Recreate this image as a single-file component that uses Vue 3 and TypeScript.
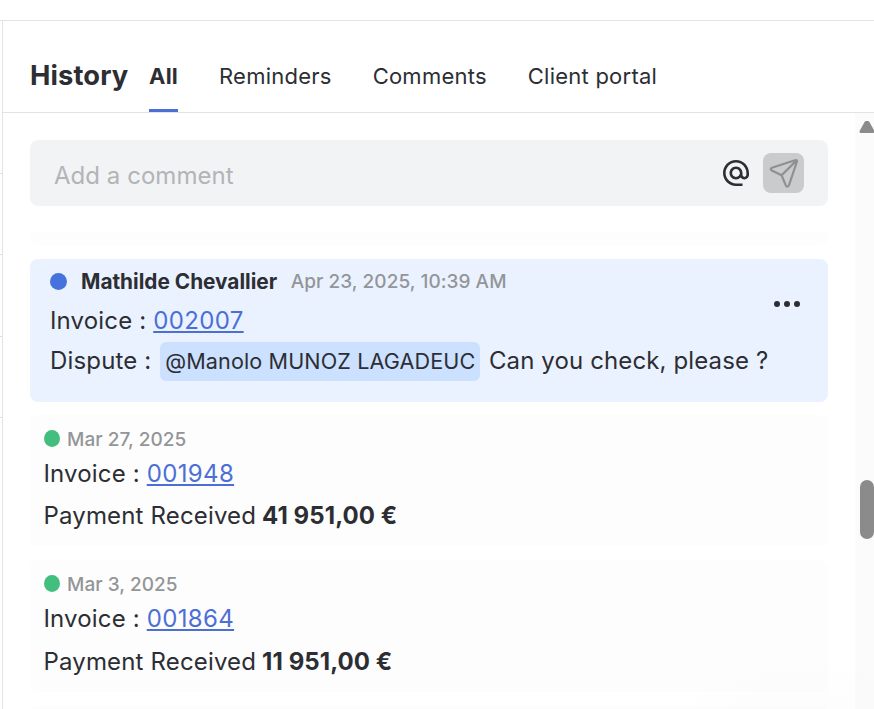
<script setup lang="ts">
import { ref } from 'vue'

interface Payment {
  date: string
  invoice: string
  amount: string
}

const tabs: string[] = ['All', 'Reminders', 'Comments', 'Client portal']
const activeTab = ref('All')

const payments: Payment[] = [
  { date: 'Mar 27, 2025', invoice: '001948', amount: '41\u00a0951,00 €' },
  { date: 'Mar 3, 2025', invoice: '001864', amount: '11\u00a0951,00 €' },
]
</script>

<template>
  <div class="page">
    <aside class="behind">
      <i v-for="n in 4" :key="n" class="row-line"></i>
    </aside>
    <main class="panel">
      <header class="header">
        <h1 class="title">History</h1>
        <nav class="tabs">
          <button
            v-for="tab in tabs"
            :key="tab"
            class="tab"
            :class="{ active: tab === activeTab }"
            @click="activeTab = tab"
          >{{ tab }}</button>
        </nav>
      </header>

      <div class="body">
        <div class="content">
          <div class="composer">
            <span class="placeholder">Add a comment</span>
            <svg class="at" viewBox="2 2 20 20">
              <path d="M12 2C6.48 2 2 6.48 2 12s4.48 10 10 10h5v-2h-5c-4.34 0-8-3.66-8-8s3.66-8 8-8 8 3.66 8 8v1.43c0 .79-.71 1.57-1.5 1.57s-1.5-.78-1.5-1.57V12c0-2.76-2.24-5-5-5s-5 2.24-5 5 2.24 5 5 5c1.38 0 2.64-.56 3.54-1.47.65.89 1.77 1.47 2.96 1.47 1.97 0 3.5-1.6 3.5-3.57V12c0-5.52-4.48-10-10-10zm0 13c-1.66 0-3-1.34-3-3s1.34-3 3-3 3 1.34 3 3-1.34 3-3 3z" />
            </svg>
            <button class="send">
              <svg viewBox="0 0 41 40">
                <path d="M9 14.7 32 7.2Q34.6 6.4 33.8 9L26 32.2Q24.3 35 22.7 32.2L18.6 22.3 8.8 17.6Q6.6 16 9 14.7ZM18.6 22.3 33.4 7.6" />
              </svg>
            </button>
          </div>

          <div class="feed">
            <div class="card card-tail"></div>

            <article class="card comment">
              <div class="line meta">
                <i class="dot blue"></i>
                <strong class="author">Mathilde Chevallier</strong>
                <span class="date">Apr 23, 2025, 10:39 AM</span>
              </div>
              <div class="line">Invoice :&nbsp;<a class="link">002007</a></div>
              <div class="line">
                Dispute :&nbsp;<span class="mention">@Manolo MUNOZ LAGADEUC</span>
                <span class="message">Can you check, please ?</span>
              </div>
              <svg class="more" viewBox="0 0 28 8">
                <circle cx="4" cy="4" r="3" /><circle cx="14" cy="4" r="3" /><circle cx="24" cy="4" r="3" />
              </svg>
            </article>

            <article v-for="p in payments" :key="p.invoice" class="card payment">
              <div class="line meta">
                <i class="dot green"></i>
                <span class="date">{{ p.date }}</span>
              </div>
              <div class="line invoice">Invoice :&nbsp;<a class="link">{{ p.invoice }}</a></div>
              <div class="line received">Payment Received&nbsp;<strong class="amount">{{ p.amount }}</strong></div>
            </article>

            <div class="card card-next"></div>
          </div>
        </div>

        <div class="scrollbar">
          <svg class="arrow" viewBox="0 0 15 12">
            <path d="M7 1.5h2L14 10.5H2Z" />
          </svg>
          <i class="thumb"></i>
        </div>
      </div>
    </main>
    <i class="glow"></i>
  </div>
</template>

<style>
body {
  margin: 0;
  overflow: hidden;
}
</style>

<style scoped>
.page {
  position: relative;
  box-sizing: border-box;
  display: flex;
  width: 874px;
  height: 709px;
  padding-top: 20px;
  overflow: hidden;
  background: #fff;
  color: #2c2e33;
  font-family: Inter, sans-serif;
}
.behind {
  box-sizing: border-box;
  flex: none;
  width: 2px;
  padding-top: 152px;
  border-top: 1px solid #e3e3e3;
}
.row-line {
  display: block;
  height: 1px;
  margin-bottom: 80.4px;
  background: #dedfe1;
}
.panel {
  box-sizing: border-box;
  display: flex;
  flex: 1;
  flex-direction: column;
  min-width: 0;
  border-top: 1px solid #e3e3e3;
  border-left: 1px solid #e3e3e3;
}
.header {
  box-sizing: border-box;
  display: flex;
  flex: none;
  height: 92px;
  padding-left: 27px;
  border-bottom: 1px solid #e3e3e3;
}
.title {
  width: 119px;
  margin: 0;
  font-size: 27.3px;
  font-weight: 700;
  line-height: 110px;
  letter-spacing: 0.12px;
}
.tabs {
  display: flex;
  gap: 41px;
}
.tab {
  box-sizing: border-box;
  height: 91px;
  padding: 22px 0 0;
  border: 0;
  border-bottom: 3px solid transparent;
  background: none;
  color: inherit;
  font: 400 22px/66px Inter, sans-serif;
  letter-spacing: 0.24px;
  white-space: nowrap;
}
.tab.active {
  width: 29px;
  border-color: #4c6fd6;
  font-weight: 700;
}
.body {
  display: flex;
  flex: 1;
  min-height: 0;
}
.content {
  box-sizing: border-box;
  flex: 1;
  min-width: 0;
  padding: 27px 27px 0;
}
.composer {
  box-sizing: border-box;
  display: flex;
  align-items: center;
  height: 66px;
  padding: 0 24px;
  border-radius: 8px;
  background: #f2f3f5;
}
.placeholder {
  flex: 1;
  padding-top: 4px;
  color: #b3b4b6;
  font-size: 24px;
  letter-spacing: 0.04px;
}
.at {
  width: 26px;
  height: 26px;
  margin-right: 14px;
  fill: #2c2e33;
}
.send {
  width: 41px;
  height: 40px;
  padding: 0;
  border: 0;
  border-radius: 8px;
  background: #cacbcd;
}
.send svg {
  display: block;
  fill: none;
  stroke: #8f9092;
  stroke-width: 2.2;
  stroke-linejoin: round;
}
.feed {
  display: flex;
  flex-direction: column;
  gap: 14px;
  margin-top: 26px;
}
.card {
  box-sizing: border-box;
  flex: none;
  border-radius: 8px;
  background: #fdfdfd;
}
.card-tail {
  height: 13px;
  border-radius: 0 0 8px 8px;
}
.comment {
  position: relative;
  height: 143px;
  margin-bottom: -1px;
  padding: 2px 20px 0;
  background: #ebf2ff;
}
.line {
  box-sizing: border-box;
  display: flex;
  align-items: center;
  height: 40px;
  font-size: 24px;
  letter-spacing: 0.16px;
  white-space: nowrap;
}
.comment .meta {
  height: 39px;
  padding-top: 2px;
}
.author {
  margin: 0 14px 0 14px;
  font-size: 20.8px;
  font-weight: 700;
  letter-spacing: 0;
}
.date {
  color: #939598;
  font-size: 19px;
  font-weight: 500;
  letter-spacing: 0.05px;
}
.dot {
  width: 17px;
  height: 17px;
  border-radius: 50%;
}
.blue {
  background: #4672dd;
}
.green {
  width: 16px;
  background: #42be7f;
}
.link {
  color: #4c6fd6;
  letter-spacing: 0.35px;
  text-decoration: underline;
  text-decoration-thickness: 2px;
  text-decoration-skip-ink: none;
  text-underline-offset: 2px;
}
.comment .meta .date {
  margin-left: -0.5px;
}
.mention {
  box-sizing: border-box;
  width: 320px;
  height: 39px;
  margin: 2px 9px 0 1.6px;
  padding-left: 5.4px;
  border-radius: 6px;
  background: #cce0ff;
  font-size: 21.6px;
  line-height: 38px;
  letter-spacing: 0.1px;
}
.message {
  letter-spacing: 0.12px;
}
.more {
  position: absolute;
  top: 41px;
  right: 27px;
  width: 28px;
  height: 8px;
  fill: #2c2e33;
}
.payment {
  height: 131.4px;
  padding: 8px 13.5px 0;
}
.payment .meta {
  gap: 7.5px;
  height: 32px;
}
.payment .dot {
  margin-top: -1px;
}
.payment .invoice {
  height: 37px;
}
.payment .received {
  height: 47.6px;
}
.amount {
  margin-left: -1px;
  font-weight: 700;
  letter-spacing: 0.08px;
}
.card-next {
  height: 40px;
}
.scrollbar {
  box-sizing: border-box;
  display: flex;
  flex: none;
  flex-direction: column;
  align-items: flex-end;
  width: 19px;
  padding-top: 8px;
  background: #fbfbfb;
}
.arrow {
  width: 15px;
  height: 12px;
  fill: #8b8b8b;
  stroke: #8b8b8b;
  stroke-width: 3;
  stroke-linejoin: round;
}
.thumb {
  width: 14px;
  height: 59px;
  margin-top: 347px;
  border-radius: 7px;
  background: #8b8b8b;
}
.glow {
  position: absolute;
  right: -60px;
  bottom: -130px;
  width: 280px;
  height: 190px;
  border-radius: 50%;
  background: radial-gradient(closest-side, rgba(0, 0, 0, 0.016), transparent);
}
</style>
